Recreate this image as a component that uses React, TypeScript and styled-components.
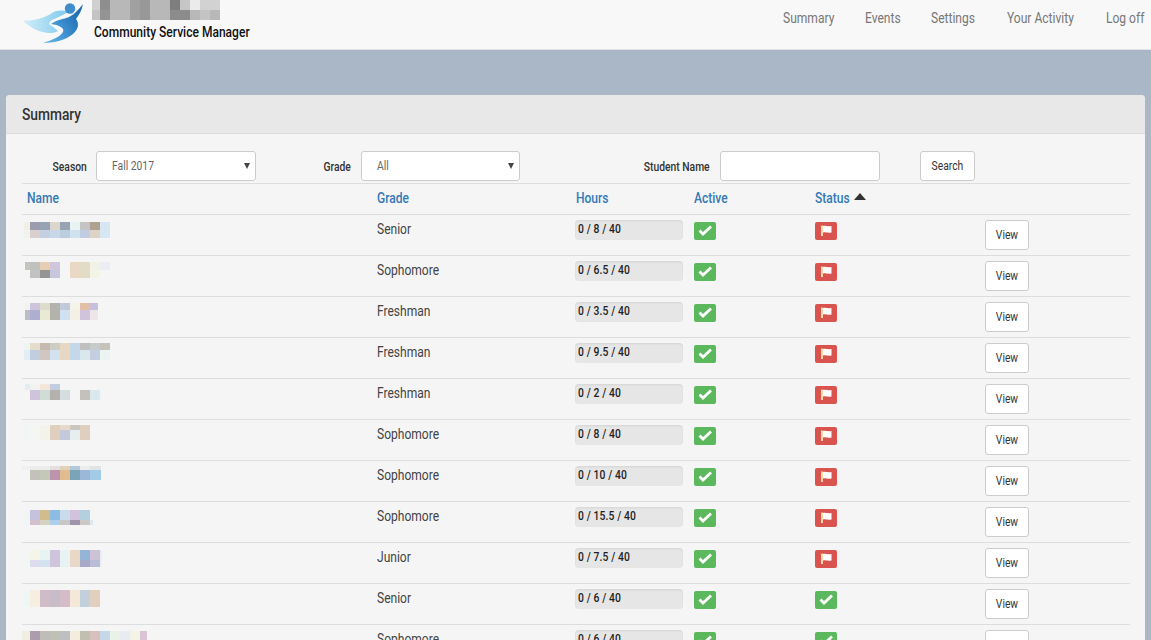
import React from "react";
import styled, { createGlobalStyle } from "styled-components";

const Global = createGlobalStyle`
  html, body { margin: 0; padding: 0; height: 640px; overflow: hidden; background: #a9b7c7; }
  body { font-family: Roboto, "Liberation Sans", sans-serif; font-size: 14px; color: #333; }
  * { box-sizing: border-box; }
`;

/* Roboto narrowed to the condensed cut of the reference */
const Txt = styled.span<{ $o?: string; $w?: number }>`
  display: inline-block; white-space: nowrap; transform: scaleX(.86);
  transform-origin: ${p => p.$o || "left"} center;
  ${p => (p.$w ? `width: ${p.$w}px;` : "")}
`;

const Nav = styled.nav`
  height: 50px; background: #f8f8f8; border-bottom: 1px solid #e0e3e6;
  display: flex; justify-content: space-between; padding: 0 5px 0 22px;
`;
const Brand = styled.div`display: flex; align-items: flex-start;`;
const BrandText = styled.div`display: flex; flex-direction: column; margin-left: 6px;`;
const BrandTitle = styled.span`margin: 4px 0 0 2px; color: #111; font-weight: 500; font-size: 14px; line-height: 16px;`;
const NavLinks = styled.div`display: flex; gap: 30px; padding-top: 10px;`;
const NavLink = styled.a<{ $w: number }>`width: ${p => p.$w}px; color: #777; font-size: 14px; line-height: 16px;`;

const Panel = styled.section`
  margin: 45px 6px 0; background: #f5f5f5; border-radius: 4px 4px 0 0; height: 545px; overflow: hidden;
`;
const PanelHead = styled.h2`
  margin: 0; height: 39px; background: #e8e8e8; border-bottom: 1px solid #ddd;
  padding: 10px 16px 0; font-size: 16px; line-height: 19px; font-weight: 500; color: #333;
`;
const PanelBody = styled.div`padding: 0 15px 0 16px;`;
const Filters = styled.div`
  height: 50px; padding-top: 17px; display: flex; align-items: flex-start; border-bottom: 1px solid #ddd;
`;
const FilterLabel = styled.label<{ $w: number; $gap?: number }>`
  width: ${p => p.$w}px; text-align: right; padding: 9px ${p => p.$gap ?? 10}px 0 0; font-size: 12px; line-height: 14px; font-weight: 500; color: #333;
`;
const Select = styled.div<{ $w: number }>`
  width: ${p => p.$w}px; height: 30px; background: #fff; border: 1px solid #ccc; border-radius: 3px;
  padding: 7px 15px; font-size: 12px; line-height: 14px; color: #666; position: relative;
`;
const Caret = styled.i`
  position: absolute; right: 5px; top: 11px; width: 0; height: 0;
  border-left: 3.5px solid transparent; border-right: 3.5px solid transparent; border-top: 6px solid #444;
`;
const Input = styled.div`width: 160px; height: 30px; background: #fff; border: 1px solid #ccc; border-radius: 3px;`;
const Button = styled.button`
  background: #fff; border: 1px solid #ccc; border-radius: 3px; color: #333; font-family: inherit;
  font-size: 12px; padding: 0;
`;
const SearchButton = styled(Button)`width: 55px; height: 30px; margin-left: 40px;`;
const ViewButton = styled(Button)`width: 44px; height: 30px; margin-top: 5px;`;

const columns = "350px 199px 118px 121px 175px 1fr";
const HeadRow = styled.div`
  display: grid; grid-template-columns: ${columns}; height: 31px; border-bottom: 1px solid #ddd;
`;
const HeadCell = styled.div`
  padding: 6px 0 0 5px; color: #337ab7; font-size: 14px; line-height: 16px; font-weight: 500; display: flex; align-items: flex-start;
`;
const SortArrow = styled.i`
  width: 0; height: 0; margin: 3px 0 0 4px;
  border-left: 6.5px solid transparent; border-right: 6.5px solid transparent; border-bottom: 7px solid #333;
`;
const Row = styled.div`
  display: grid; grid-template-columns: ${columns}; height: 41px; border-bottom: 1px solid #ddd;
`;
const NameCell = styled.div`height: 40px; overflow: hidden;`;
const GradeCell = styled.div`padding: 6px 0 0 5px; font-size: 14px; line-height: 16px; color: #444;`;
const HoursCell = styled.div`padding: 5px 0 0 4px;`;
const Hours = styled.div`
  width: 108px; height: 20px; background: #e6e6e6; border-radius: 4px; box-shadow: inset 0 1px 2px rgba(0,0,0,.08);
  padding-left: 3px; font-size: 12px; line-height: 19px; color: #222; font-weight: 500; letter-spacing: .15px;
`;
const IconCell = styled.div`padding: 7px 0 0 5px;`;
const Badge = styled.span<{ $c: string }>`
  width: 22px; height: 18px; border-radius: 2px; background: ${p => p.$c}; display: flex; align-items: center; justify-content: center;
`;
const ActionCell = styled.div`padding-left: 0;`;

const Check = () => (
  <svg width="14" height="12" viewBox="0 0 14 12"><path d="M1.500 5.500l3.500 3.500 8-7.500" fill="none" stroke="#fff" strokeWidth="2.800" /></svg>
);
const Flag = () => (
  <svg width="14" height="13" viewBox="0 0 14 13">
    <path d="M2 .5h2V11H2z" fill="#f9d9a8" />
    <path d="M4 1c2.500-.6 5 .6 8.500 0v6.500c-3.500.6-6-.6-8.500 0z" fill="#fff" />
  </svg>
);

type Cell = string | null;
const Mosaic = ({ x, rows, w = 130, h = 40 }: { x: number[]; rows: { y: number; h: number; c: Cell[] }[]; w?: number; h?: number }) => (
  <svg width={w} height={h} shapeRendering="crispEdges" style={{ display: "block" }}>
    {rows.map((r, i) =>
      r.c.map((c, j) => (c ? <rect key={i + "-" + j} x={x[j]} y={r.y} width={x[j + 1] - x[j]} height={r.h} fill={c} /> : null))
    )}
  </svg>
);

const edges = (start: number, n: number, end?: number) => {
  const a = [start];
  for (let i = 0; i < n; i++) a.push(8 + i * 10);
  if (end !== undefined) a[a.length - 1] = end;
  return a;
};

const data = [
  { grade: "Senior", h: "0 / 8 / 40", flag: true, x: edges(2, 9), rows: [
    { y: 7, h: 8, c: ["#f2f0e6","#9d9bb0","#95a3b3","#ddd6cb","#95a3b3","#eaf3f4","#c4c4c4","#b0a090","#d6e6f2"] },
    { y: 15, h: 8, c: ["#f0f3ee","#d9cfcc","#c4d0e0","#c6d8e8","#bccde0","#d0e2ee","#c0cce0","#ddd3c5","#d6e6f2"] } ] },
  { grade: "Sophomore", h: "0 / 6.5 / 40", flag: true, x: edges(3, 9), rows: [
    { y: 6, h: 8, c: ["#c4c4c0","#c0c0bc","#e6cdb4","#cfc6dc",null,"#ead8c4","#e2dcc6","#f0f2e6","#eaedf2"] },
    { y: 14, h: 8, c: ["#f2f6f4","#c2c2c0","#949494","#c6c6dc",null,"#ead8c4","#e2dcc6","#f2f4e6",null] } ] },
  { grade: "Freshman", h: "0 / 3.5 / 40", flag: true, x: edges(3, 8, 76), rows: [
    { y: 6, h: 7, c: ["#eef4f4","#d0c4dc","#dedccb","#b4b2ac","#c0cadc","#f4f4e8","#e2bfa6","#c6c0da"] },
    { y: 13, h: 10, c: ["#bcbcc8","#b0aed0","#e8ead4","#b4b2ac","#d0e2f2","#f5f0e4","#d0c4dc","#ece6e8"] } ] },
  { grade: "Freshman", h: "0 / 9.5 / 40", flag: true, x: edges(2, 9), rows: [
    { y: 5, h: 7, c: ["#eef4f2","#e6dccc","#c4bab0","#cccec4","#e8d8c2","#c4d8ea","#c0c0c0","#c6cccc","#c6c2bc"] },
    { y: 12, h: 10, c: ["#e2eef4","#c0cee0","#d2c6c0","#d2e2f0","#e8d8c2","#c4d8ea","#d8e8ec","#c4cee0","#ecf4f2"] } ] },
  { grade: "Freshman", h: "0 / 2 / 40", flag: true, x: edges(3, 8), rows: [
    { y: 5, h: 6, c: ["#e6ecf4","#f2f2ee","#f4e6d8","#c2cee0",null,null,null,null] },
    { y: 11, h: 10, c: [null,"#d0c4dc","#d2dcd6","#b4b2ac","#d4dee0",null,"#c4c0bc","#dce8f0"] } ] },
  { grade: "Sophomore", h: "0 / 8 / 40", flag: true, x: edges(2, 7), rows: [
    { y: 5, h: 5, c: ["#f0f6f4","#f4f6f4","#f3f3ec","#e0cfbe","#e6dacb","#c8c6be","#e0cfbe"] },
    { y: 10, h: 10, c: ["#f0f6f4","#f4f6f4","#f3f3ec","#e0cfbe","#c4cada","#e6eeee","#e0cfbe"] } ] },
  { grade: "Sophomore", h: "0 / 10 / 40", flag: true, x: edges(0, 8, 79), rows: [
    { y: 5, h: 4, c: ["#f0f0f0","#ececec","#ececec","#e4e0e0","#e4d2b8","#b4c8dc","#ececec","#e0e4e6"] },
    { y: 9, h: 10, c: [null,"#c4c0ba","#c4c8b8","#bc94ac","#e0bc90","#7ca4b8","#9cb8d8","#a0cce8"] } ] },
  { grade: "Sophomore", h: "0 / 15.5 / 40", flag: true, x: edges(2, 8, 71), rows: [
    { y: 8, h: 10, c: ["#f0f6f6","#c4c2dc","#d2bc8e","#8cbce4","#c8dcec","#d2c2dc","#b4d0e0",null] },
    { y: 18, h: 5, c: ["#f0f6f6","#d4c0cc","#d6d2c2","#acd0ec","#c8c6c6","#a094ac","#ccc8c4","#dce8f4"] } ] },
  { grade: "Junior", h: "0 / 7.5 / 40", flag: true, x: edges(2, 9, 80), rows: [
    { y: 7, h: 10, c: ["#f2f7f6","#f4f4e8","#e6f4f4","#d0c4dc","#e8f4f4","#ead8c4","#94b4d8","#ccc4d6","#e8eef4"] },
    { y: 17, h: 7, c: ["#f2f7f6","#dcdcec","#d2e2ee","#d0c4dc","#e8f2f2","#e8d8c8","#a8a8c8","#b8bcd4","#e8eef4"] } ] },
  { grade: "Senior", h: "0 / 6 / 40", flag: false, x: edges(2, 8), rows: [
    { y: 6, h: 17, c: ["#f0f6f4","#f6eee0","#d0bcc8","#c8bcc8","#d4bcc8","#f4e8d8","#c2d0dc","#e2d0be"] } ] },
  { grade: "Sophomore", h: "0 / 6 / 40", flag: false, x: edges(0, 13, 125), rows: [
    { y: 6, h: 17, c: ["#f0eee0","#ac9cac","#c0bcb8","#c0c0b4","#bcc0c0","#f4ecdc","#c0c0b0","#d8c0bc","#c4d8e8","#e8f2e6","#e8ecf2","#f4f4e6","#d8c4d4"] } ] },
];

const Logo = () => (
  <svg width="64" height="46" viewBox="0 0 64 46">
    <defs>
      <linearGradient id="wing" x1="0" y1="0" x2="1" y2="0">
        <stop offset="0" stopColor="#d4eef8" />
        <stop offset="1" stopColor="#7ccaec" />
      </linearGradient>
      <linearGradient id="body" x1="0" y1="1" x2="1" y2="0.4">
        <stop offset="0" stopColor="#6bbde6" />
        <stop offset="0.55" stopColor="#3c8fcf" />
        <stop offset="1" stopColor="#1f6bb0" />
      </linearGradient>
    </defs>
    <path d="M1 20.500C12 21 22 18 30 13C35 10 41 10 46 12C42 15 36 17 30 20C26 23 27 25 30 26L36 31C32 33 30 33 28 33C18 33 8 28 1 20.500Z" fill="url(#wing)" />
    <circle cx="48" cy="8.500" r="5.200" fill="#3f8ecb" />
    <path d="M29 24C34 20 42 19 47 17C53 14 57 9 61 4C60 10 57 15 54 19C57 23 57 29 51 34C44 40 32 43 21 43C30 40 38 37 41 32C43 28 37 25 29 24Z" fill="url(#body)" />
  </svg>
);

const brandPixels = [
  { y: 0, h: 10, c: ["#d0d0d0","#8e8e8e","#b8b8b8","#b8b8b8","#a0a0a0","#989898","#b8b8b8","#b8b8b8","#7e7e7e","#c6c6c6","#ebebeb","#d2d2d2","#d2d2d2"] },
  { y: 10, h: 10, c: ["#c4c4c4","#949494","#b8b8b8","#b8b8b8","#a0a0a0","#989898","#b8b8b8","#b8b8b8","#8c8c8c","#8c8c8c","#b8b8b8","#c4c4c4","#b8b8b8"] },
];

const links: [string, number][] = [["Summary", 52], ["Events", 36], ["Settings", 46], ["Your Activity", 69], ["Log off", 40]];

export default function App() {
  return (
    <>
      <Global />
      <Nav>
        <Brand>
          <Logo />
          <BrandText>
            <Mosaic x={edges(0, 13)} rows={brandPixels} w={128} h={20} />
            <BrandTitle><Txt>Community Service Manager</Txt></BrandTitle>
          </BrandText>
        </Brand>
        <NavLinks>
          {links.map(([t, w]) => <NavLink key={t} $w={w}><Txt>{t}</Txt></NavLink>)}
        </NavLinks>
      </Nav>
      <Panel>
        <PanelHead><Txt>Summary</Txt></PanelHead>
        <PanelBody>
          <Filters>
            <FilterLabel $w={74} $gap={9}><Txt $o="right">Season</Txt></FilterLabel>
            <Select $w={160}><Txt>Fall 2017</Txt><Caret /></Select>
            <FilterLabel $w={105}><Txt $o="right">Grade</Txt></FilterLabel>
            <Select $w={159}><Txt>All</Txt><Caret /></Select>
            <FilterLabel $w={200}><Txt $o="right">Student Name</Txt></FilterLabel>
            <Input />
            <SearchButton><Txt $o="center">Search</Txt></SearchButton>
          </Filters>
          <HeadRow>
            <HeadCell><Txt>Name</Txt></HeadCell>
            <HeadCell><Txt>Grade</Txt></HeadCell>
            <HeadCell><Txt>Hours</Txt></HeadCell>
            <HeadCell><Txt>Active</Txt></HeadCell>
            <HeadCell><Txt $w={35}>Status</Txt><SortArrow /></HeadCell>
            <HeadCell />
          </HeadRow>
          {data.map((d, i) => (
            <Row key={i}>
              <NameCell><Mosaic x={d.x} rows={d.rows} /></NameCell>
              <GradeCell><Txt>{d.grade}</Txt></GradeCell>
              <HoursCell><Hours><Txt>{d.h}</Txt></Hours></HoursCell>
              <IconCell><Badge $c="#5cb85c"><Check /></Badge></IconCell>
              <IconCell><Badge $c={d.flag ? "#d9534f" : "#5cb85c"}>{d.flag ? <Flag /> : <Check />}</Badge></IconCell>
              <ActionCell><ViewButton><Txt $o="center">View</Txt></ViewButton></ActionCell>
            </Row>
          ))}
        </PanelBody>
      </Panel>
    </>
  );
}
